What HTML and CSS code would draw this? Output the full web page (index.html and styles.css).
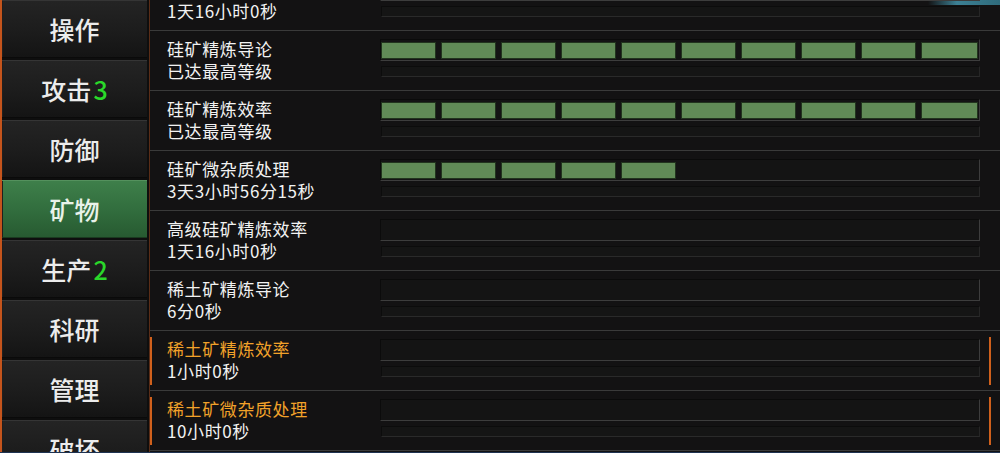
FILE: index.html
```html
<!DOCTYPE html>
<html lang="zh-CN">
<head>
<meta charset="utf-8">
<title>矿物</title>
<link rel="stylesheet" href="styles.css">
</head>
<body>
<div class="app">
  <nav class="sidebar">
    <div class="tab">操作</div>
    <div class="tab">攻击<span class="badge">3</span></div>
    <div class="tab">防御</div>
    <div class="tab active">矿物</div>
    <div class="tab">生产<span class="badge">2</span></div>
    <div class="tab">科研</div>
    <div class="tab">管理</div>
    <div class="tab">破坏</div>
  </nav>
  <main class="panel">
    <div class="list">
      <div class="row">
        <div class="info"><div class="name">硅矿开采效率</div><div class="time">1天16小时0秒</div></div>
        <div class="bars">
          <div class="level"><span class="seg"></span><span class="seg"></span><span class="seg"></span><span class="seg"></span><span class="seg"></span><span class="seg"></span><span class="seg"></span><span class="seg"></span><span class="seg"></span><span class="seg"></span></div>
          <div class="progress"></div>
        </div>
      </div>
      <div class="row">
        <div class="info"><div class="name">硅矿精炼导论</div><div class="time">已达最高等级</div></div>
        <div class="bars">
          <div class="level"><span class="seg on"></span><span class="seg on"></span><span class="seg on"></span><span class="seg on"></span><span class="seg on"></span><span class="seg on"></span><span class="seg on"></span><span class="seg on"></span><span class="seg on"></span><span class="seg on"></span></div>
          <div class="progress"></div>
        </div>
      </div>
      <div class="row">
        <div class="info"><div class="name">硅矿精炼效率</div><div class="time">已达最高等级</div></div>
        <div class="bars">
          <div class="level"><span class="seg on"></span><span class="seg on"></span><span class="seg on"></span><span class="seg on"></span><span class="seg on"></span><span class="seg on"></span><span class="seg on"></span><span class="seg on"></span><span class="seg on"></span><span class="seg on"></span></div>
          <div class="progress"></div>
        </div>
      </div>
      <div class="row">
        <div class="info"><div class="name">硅矿微杂质处理</div><div class="time">3天3小时56分15秒</div></div>
        <div class="bars">
          <div class="level"><span class="seg on"></span><span class="seg on"></span><span class="seg on"></span><span class="seg on"></span><span class="seg on"></span><span class="seg"></span><span class="seg"></span><span class="seg"></span><span class="seg"></span><span class="seg"></span></div>
          <div class="progress"></div>
        </div>
      </div>
      <div class="row">
        <div class="info"><div class="name">高级硅矿精炼效率</div><div class="time">1天16小时0秒</div></div>
        <div class="bars">
          <div class="level"><span class="seg"></span><span class="seg"></span><span class="seg"></span><span class="seg"></span><span class="seg"></span><span class="seg"></span><span class="seg"></span><span class="seg"></span><span class="seg"></span><span class="seg"></span></div>
          <div class="progress"></div>
        </div>
      </div>
      <div class="row">
        <div class="info"><div class="name">稀土矿精炼导论</div><div class="time">6分0秒</div></div>
        <div class="bars">
          <div class="level"><span class="seg"></span><span class="seg"></span><span class="seg"></span><span class="seg"></span><span class="seg"></span><span class="seg"></span><span class="seg"></span><span class="seg"></span><span class="seg"></span><span class="seg"></span></div>
          <div class="progress"></div>
        </div>
      </div>
      <div class="row locked">
        <div class="info"><div class="name">稀土矿精炼效率</div><div class="time">1小时0秒</div></div>
        <div class="bars">
          <div class="level"><span class="seg"></span><span class="seg"></span><span class="seg"></span><span class="seg"></span><span class="seg"></span><span class="seg"></span><span class="seg"></span><span class="seg"></span><span class="seg"></span><span class="seg"></span></div>
          <div class="progress"></div>
        </div>
      </div>
      <div class="row locked">
        <div class="info"><div class="name">稀土矿微杂质处理</div><div class="time">10小时0秒</div></div>
        <div class="bars">
          <div class="level"><span class="seg"></span><span class="seg"></span><span class="seg"></span><span class="seg"></span><span class="seg"></span><span class="seg"></span><span class="seg"></span><span class="seg"></span><span class="seg"></span><span class="seg"></span></div>
          <div class="progress"></div>
        </div>
      </div>
    </div>
  </main>
</div>
</body>
</html>
```

FILE: styles.css
```css
* { box-sizing: border-box; }

html, body {
  margin: 0;
  padding: 0;
  background: #0f0f10;
}

body {
  font-family: "Noto Sans CJK SC", "Noto Sans", sans-serif;
  color: #f2f2f2;
}

.app {
  display: flex;
  width: 1000px;
  height: 453px;
  overflow: hidden;
  border-bottom: 1px solid #1f3352;
}

/* ---------- sidebar ---------- */
.sidebar {
  width: 149px;
  flex: none;
  display: flex;
  flex-direction: column;
  gap: 2px;
  padding-right: 2px;
  background: #0e0e0e;
  border-left: 2px solid #c4541c;
  overflow: hidden;
}

.tab {
  flex: none;
  height: 58px;
  display: flex;
  align-items: center;
  justify-content: center;
  font-size: 25px;
  font-weight: 500;
  color: #ececec;
  background: linear-gradient(#242424, #1c1c1c 55%, #141414);
  border-top: 1px solid #353535;
  border-bottom: 1px solid #0a0a0a;
  box-shadow: inset 1px 0 0 #1f1f1f;
}

.tab.active {
  color: #e9f2e9;
  background: linear-gradient(#3e7f4a, #326e3e 50%, #275a31);
  border-top: 1px solid #54915d;
  border-bottom: 1px solid #1a3a20;
}

.badge {
  color: #2ad82a;
  margin-left: 2px;
}

/* ---------- panel ---------- */
.panel {
  flex: 1;
  background:
    linear-gradient(to right, rgba(40, 90, 110, 0), #3c8094 40%, #2f6b7c) no-repeat right top / 72px 5px,
    #131213;
  border-left: 1px solid #5a2d17;
  overflow: hidden;
}

.list {
  margin-top: -29px;
  display: flex;
  flex-direction: column;
}

.row {
  height: 60px;
  flex: none;
  display: flex;
  padding-left: 17px;
  border-bottom: 1px solid #3a3a3a;
}

.row.locked {
  background:
    linear-gradient(#d0601c, #d0601c) no-repeat left 0 top 6px / 2px 48px,
    linear-gradient(#d0601c, #d0601c) no-repeat right 9px top 6px / 2px 48px;
}

.info {
  width: 213px;
  flex: none;
  padding-top: 7px;
  font-size: 17px;
  line-height: 22px;
  letter-spacing: 0.6px;
  white-space: nowrap;
}

.locked .name {
  color: #f2a22a;
}

.bars {
  width: 600px;
  flex: none;
  padding-top: 8px;
  display: flex;
  flex-direction: column;
  gap: 5px;
}

.level {
  height: 22px;
  display: flex;
  gap: 5px;
  padding: 2px 1px 1px 0;
  background: #141414;
  border: 1px solid;
  border-color: #0b0b0b #3d3d3d #3d3d3d #0b0b0b;
}

.seg {
  flex: 0 0 55px;
}

.seg:last-child {
  flex: 1 0 55px;
}

.seg.on {
  background: #618b57;
  border: 1px solid #22341e;
}

.progress {
  height: 11px;
  margin-left: 1px;
  background: #151515;
  border: 1px solid;
  border-color: #0c0c0c #262626 #2a2a2a #0c0c0c;
}
```
